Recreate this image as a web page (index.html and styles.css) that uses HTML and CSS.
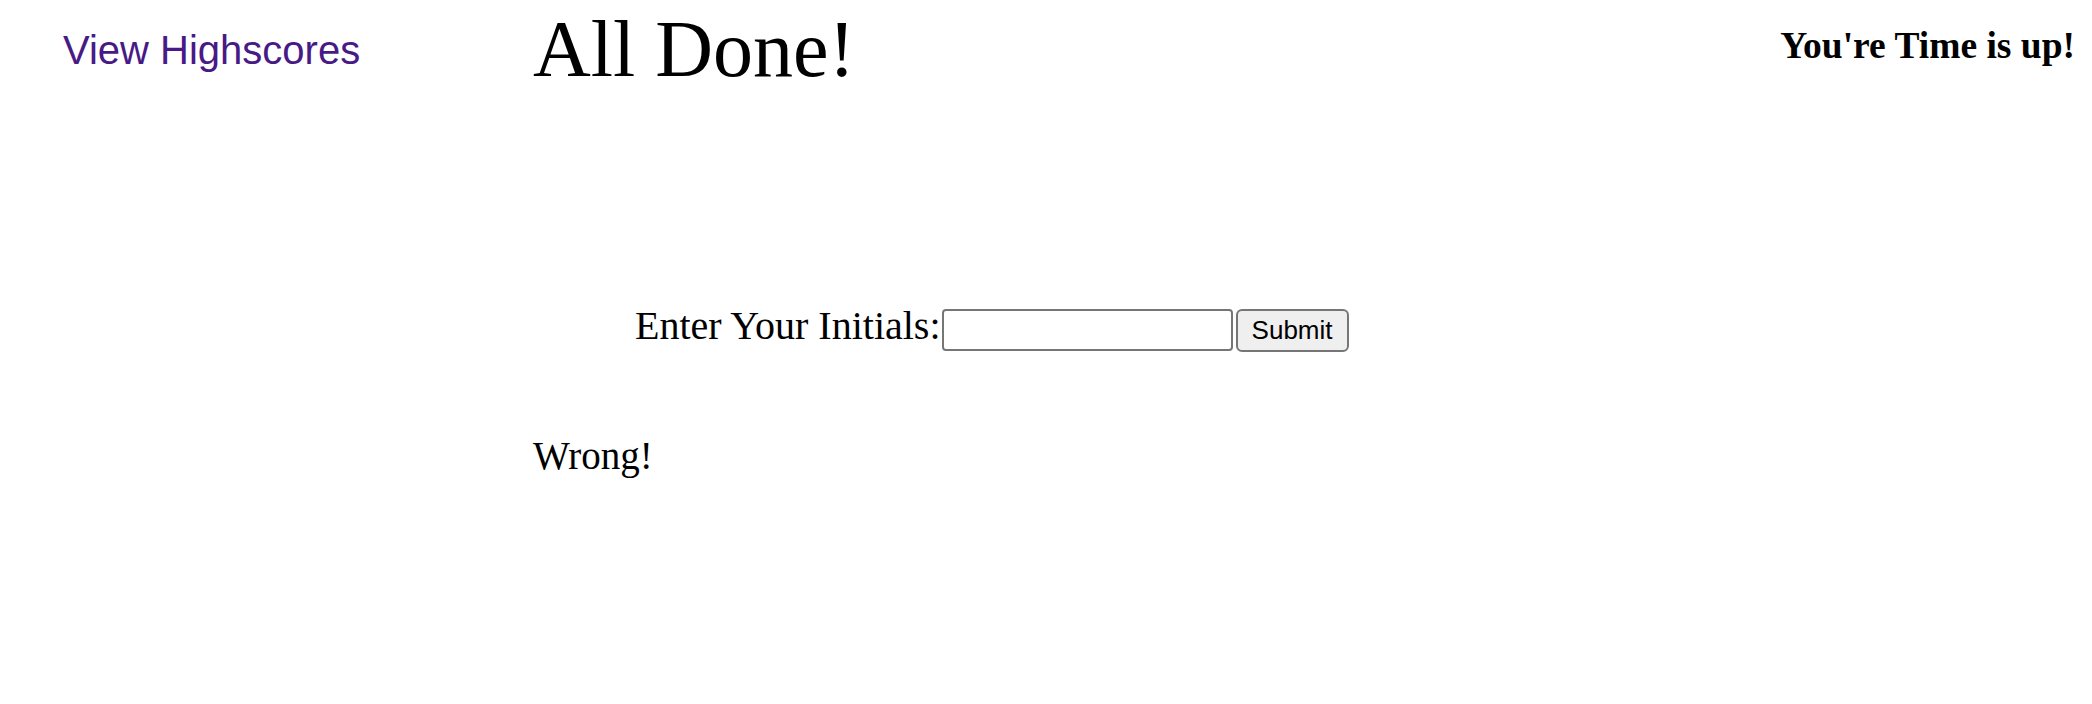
FILE: index.html
```html
<!DOCTYPE html>
<html lang="en">
<head>
<meta charset="utf-8">
<title>Quiz</title>
<link rel="stylesheet" href="styles.css">
</head>
<body>
<div class="page">
  <nav class="nav">
    <a class="nav-link" href="#">View Highscores</a>
  </nav>
  <main class="main">
    <h1 class="title">All Done!</h1>
    <form class="initials-form">
      <label class="initials-label" for="initials">Enter Your Initials:</label><input class="initials-input" id="initials" type="text"><button class="submit-btn" type="button">Submit</button>
    </form>
    <p class="feedback">Wrong!</p>
  </main>
  <aside class="timer">
    <h3 class="timer-text">You're Time is up!</h3>
  </aside>
</div>
</body>
</html>
```

FILE: styles.css
```css
html, body {
  margin: 0;
  padding: 0;
  background: #ffffff;
}

body {
  font-family: "Liberation Serif", "Times New Roman", serif;
  color: #000000;
}

.page {
  display: grid;
  grid-template-columns: 533px 1fr auto;
  align-items: start;
}

.nav {
  padding: 27px 0 0 63px;
}

.nav-link {
  font-family: "Liberation Sans", Arial, sans-serif;
  font-size: 40px;
  line-height: 46px;
  color: #481a86;
  text-decoration: none;
}

.main {
  padding-top: 4px;
}

.title {
  margin: 0;
  font-size: 80px;
  line-height: 90px;
  font-weight: normal;
}

.initials-form {
  display: flex;
  align-items: flex-start;
  margin: 210px 0 0 0;
  padding-left: 102px;
}

.initials-label {
  font-size: 40px;
  line-height: 44px;
}

.initials-input {
  box-sizing: border-box;
  width: 291px;
  height: 42px;
  margin: 5px 0 0 1px;
  border: 2px solid #767676;
  border-radius: 4px;
  background: #ffffff;
  padding: 0 4px;
  font-size: 26px;
}

.submit-btn {
  box-sizing: border-box;
  width: 113px;
  height: 43px;
  margin: 5px 0 0 3px;
  border: 2px solid #767676;
  border-radius: 6px;
  background: #efefef;
  color: #000000;
  font-family: "Liberation Sans", Arial, sans-serif;
  font-size: 26px;
  padding: 0;
}

.feedback {
  margin: 82px 0 0 0;
  font-size: 39px;
  line-height: 44px;
}

.timer {
  padding: 25px 17px 0 0;
}

.timer-text {
  margin: 0;
  font-size: 37.5px;
  line-height: 42px;
  font-weight: bold;
}
```
